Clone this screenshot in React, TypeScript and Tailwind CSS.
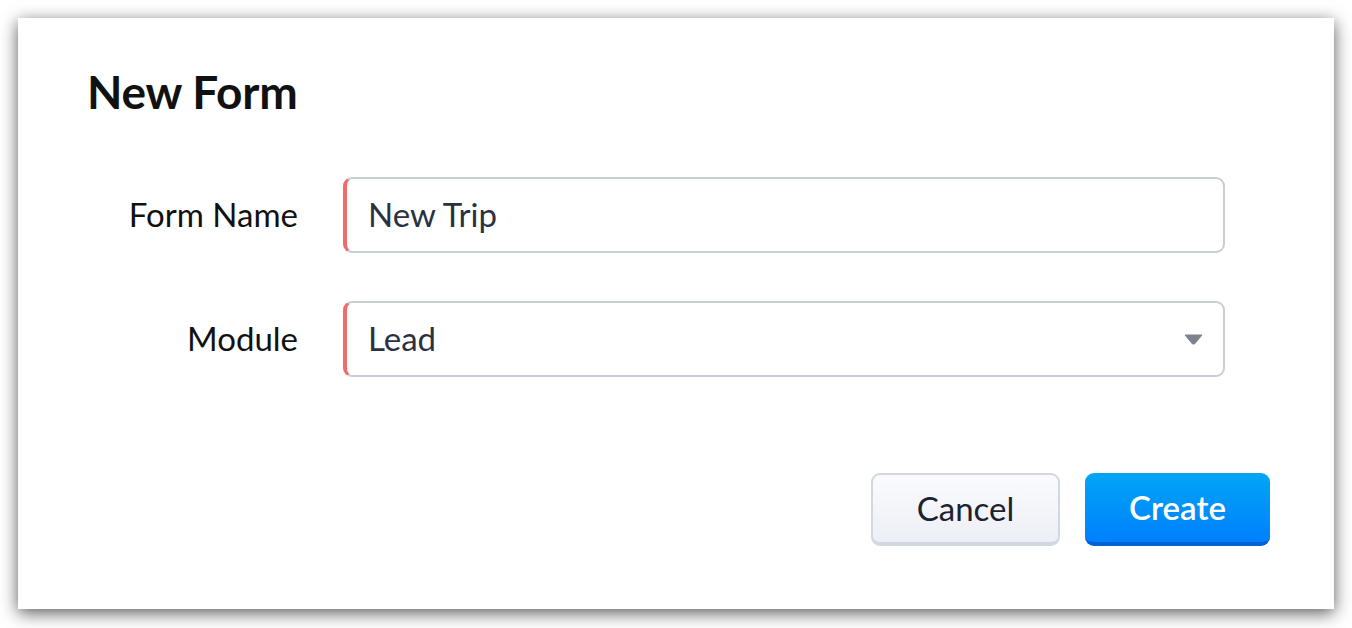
import React from 'react';

export default function App() {
    return (
        <div className="w-[1352px] h-[628px] bg-white pt-[18px] pl-[18px]" style={{ fontFamily: 'Lato, "Open Sans", sans-serif' }}>
            <div className="w-[1316px] h-[591px] bg-white shadow-[0_4px_16px_rgba(0,0,0,0.65)] flex flex-col">
                {/* Title */}
                <h1 className="pl-[69px] pt-[48px] text-[46px] leading-[52px] font-bold text-[#111111] tracking-[-0.2px]">New Form</h1>

                {/* Fields */}
                <div className="mt-[59px] flex flex-col gap-[48px]">
                    <div className="flex items-center">
                        <label className="w-[280px] text-right text-[33px] text-[#111111]">Form Name</label>
                        <div className="ml-[45px] w-[882px] h-[76px] flex items-center rounded-[9px] border-2 border-l-4 border-[#c9cdd4] border-l-[#f06b6b] pl-[21px]">
                            <span className="text-[33px] text-[#2a3142]">New Trip</span>
                        </div>
                    </div>
                    <div className="flex items-center">
                        <label className="w-[280px] text-right text-[33px] text-[#111111]">Module</label>
                        <div className="ml-[45px] w-[882px] h-[76px] flex items-center justify-between rounded-[9px] border-2 border-l-4 border-[#c9cdd4] border-l-[#f06b6b] pl-[21px] pr-[20px]">
                            <span className="text-[33px] text-[#2a3142]">Lead</span>
                            <svg width="19" height="11" viewBox="0 0 19 11">
                                <path d="M1 1h17l-7.5 9h-2z" fill="#7f838c" stroke="#7f838c" strokeWidth="1" strokeLinejoin="round" />
                            </svg>
                        </div>
                    </div>
                </div>

                {/* Actions */}
                <div className="mt-[96px] flex justify-end gap-[25px] pr-[64px]">
                    <button className="w-[189px] h-[73px] rounded-[9px] border-2 border-b-[4px] border-[#d3d7e0] bg-gradient-to-b from-[#fafbfd] to-[#eceff6] text-[33px] text-[#1c222e]">
                        Cancel
                    </button>
                    <button className="w-[185px] h-[73px] rounded-[9px] border-b-[4px] border-[#0062d4] bg-gradient-to-b from-[#05a5f6] to-[#007ffd] text-[33px] font-semibold text-white">
                        Create
                    </button>
                </div>
            </div>
        </div>
    );
}
